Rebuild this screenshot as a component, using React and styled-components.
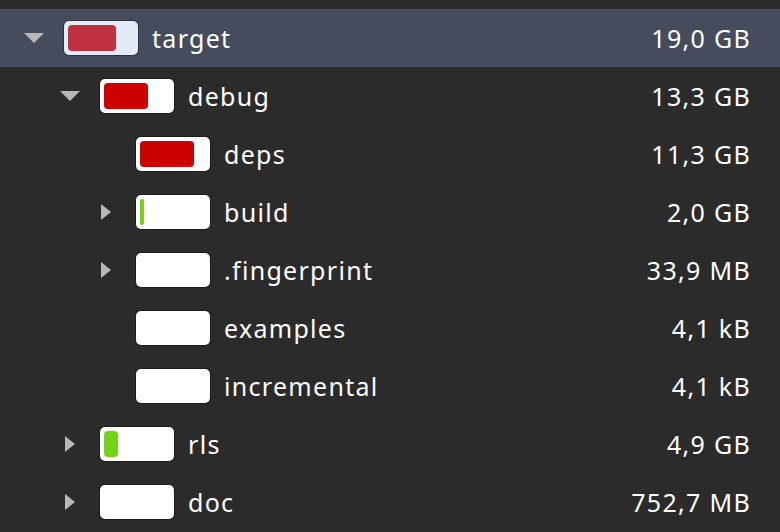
import React from "react";
import styled, { createGlobalStyle } from "styled-components";

const Global = createGlobalStyle`
  html, body { margin: 0; padding: 0; background: #2b2b2b; }
  body { font-family: "Noto Sans", "Open Sans", sans-serif; }
`;

const List = styled.div`
  display: flex;
  flex-direction: column;
  padding-top: 9px;
  width: 780px;
  height: 532px;
  box-sizing: border-box;
  overflow: hidden;
  background: #2b2b2b;
`;

const Row = styled.div`
  display: flex;
  align-items: center;
  height: 58px;
  flex-shrink: 0;
  padding-left: ${(p) => 14 + p.$level * 36}px;
  padding-right: 29px;
  background: ${(p) => (p.$selected ? "#454c5d" : "transparent")};
  color: #ffffff;
  font-size: 25px;
`;

const Expander = styled.div`
  width: 40px;
  height: 58px;
  display: flex;
  align-items: center;
  justify-content: center;
  margin-right: 10px;
  flex-shrink: 0;
`;

const Bar = styled.div`
  width: 74px;
  height: 34px;
  box-sizing: border-box;
  border-radius: 5px;
  padding: 4px;
  background: ${(p) => (p.$selected ? "#e3eaf8" : "#ffffff")};
  box-shadow: 0 0 0 1px rgba(0, 0, 0, 0.35);
  flex-shrink: 0;
  display: flex;
`;

const Fill = styled.div`
  height: 100%;
  border-radius: 4px;
  background: ${(p) => p.$color};
`;

const Name = styled.div`
  flex: 1;
  margin-left: 14px;
  letter-spacing: 1.3px;
`;

const Size = styled.div`
  text-align: right;
  letter-spacing: 1.3px;
`;

const Arrow = ({ open }) =>
  open ? (
    <svg width="20" height="10" viewBox="0 0 20 10">
      <path d="M0 0 L20 0 L10 10 Z" fill="#b8b8b8" />
    </svg>
  ) : (
    <svg width="10" height="16" viewBox="0 0 10 16">
      <path d="M0 0 L10 8 L0 16 Z" fill="#b8b8b8" />
    </svg>
  );

const rows = [
  { level: 0, name: "target", size: "19,0 GB", arrow: "open", fill: 48, color: "#c0313f", selected: true },
  { level: 1, name: "debug", size: "13,3 GB", arrow: "open", fill: 44, color: "#cc0000" },
  { level: 2, name: "deps", size: "11,3 GB", arrow: null, fill: 54, color: "#cc0000" },
  { level: 2, name: "build", size: "2,0 GB", arrow: "closed", fill: 4, color: "#73d216" },
  { level: 2, name: ".fingerprint", size: "33,9 MB", arrow: "closed", fill: 0, color: "#73d216" },
  { level: 2, name: "examples", size: "4,1 kB", arrow: null, fill: 0, color: "#73d216" },
  { level: 2, name: "incremental", size: "4,1 kB", arrow: null, fill: 0, color: "#73d216" },
  { level: 1, name: "rls", size: "4,9 GB", arrow: "closed", fill: 14, color: "#73d216" },
  { level: 1, name: "doc", size: "752,7 MB", arrow: "closed", fill: 0, color: "#73d216" },
];

export default function App() {
  return (
    <>
      <Global />
      <List>
        {rows.map((r) => (
          <Row key={r.name} $level={r.level} $selected={r.selected}>
            <Expander>{r.arrow && <Arrow open={r.arrow === "open"} />}</Expander>
            <Bar $selected={r.selected}>
              {r.fill > 0 && <Fill $color={r.color} style={{ width: r.fill }} />}
            </Bar>
            <Name>{r.name}</Name>
            <Size>{r.size}</Size>
          </Row>
        ))}
      </List>
    </>
  );
}
